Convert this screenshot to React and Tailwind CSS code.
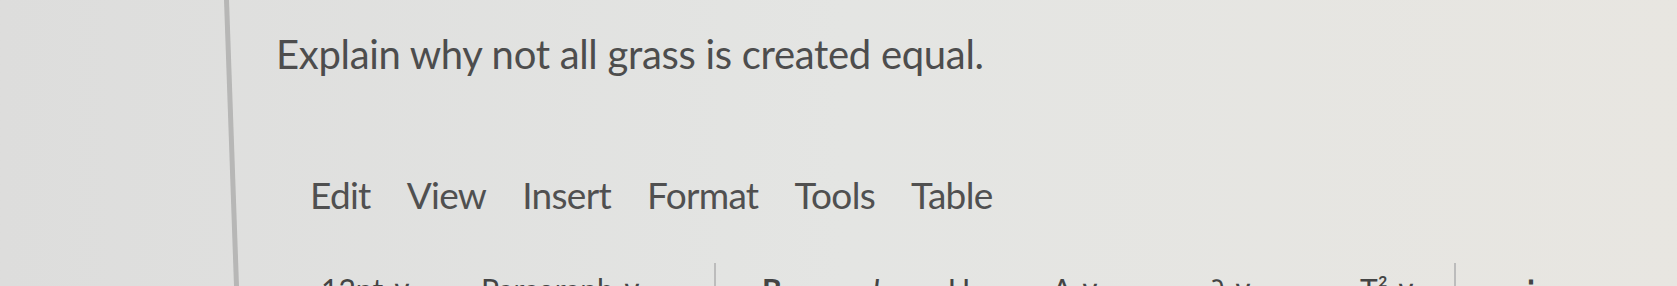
import React from "react";

const MENU = ["Edit", "View", "Insert", "Format", "Tools", "Table"];

export default function App() {
  return (
    <div
      className="h-[286px] w-full overflow-hidden flex bg-gradient-to-r from-[#dddddc] via-[#e4e5e3] to-[#e8e6e1]"
      style={{ fontFamily: "Lato, 'Open Sans', sans-serif" }}
    >
      <div className="w-[229px] shrink-0" />
      <div className="w-[5px] shrink-0 bg-[#b7b7b6] skew-x-2" />
      <div className="flex-1 pl-[42px]">
        <h1 className="pt-[30px] text-[40px] leading-[48px] text-[#4d4d4d] tracking-[-0.3px]">
          Explain why not all grass is created equal.
        </h1>

        <div className="mt-[94px] pl-[34px] flex items-center gap-[36px] text-[37px] leading-[46px] text-[#505050] tracking-[-0.7px]">
          {MENU.map(m => (
            <span key={m}>{m}</span>
          ))}
        </div>

        <div className="mt-[53px] pl-[45px] flex items-start text-[30px] leading-[36px] text-[#444]">
          <span className="w-[160px]">12pt ∨</span>
          <span className="w-[233px]">Paragraph ∨</span>
          <div className="w-[2px] h-[30px] -mt-[8px] bg-[#bcbcbc] mr-[46px]" />
          <span className="w-[110px] font-bold">B</span>
          <span className="w-[76px] italic">I</span>
          <span className="w-[104px] underline">U</span>
          <span className="w-[155px]">A ∨</span>
          <span className="w-[153px]">∂ ∨</span>
          <span className="w-[94px]">T² ∨</span>
          <div className="w-[2px] h-[30px] -mt-[8px] bg-[#bcbcbc] mr-[60px]" />
          <span className="font-bold">⋮</span>
        </div>
      </div>
    </div>
  );
}
